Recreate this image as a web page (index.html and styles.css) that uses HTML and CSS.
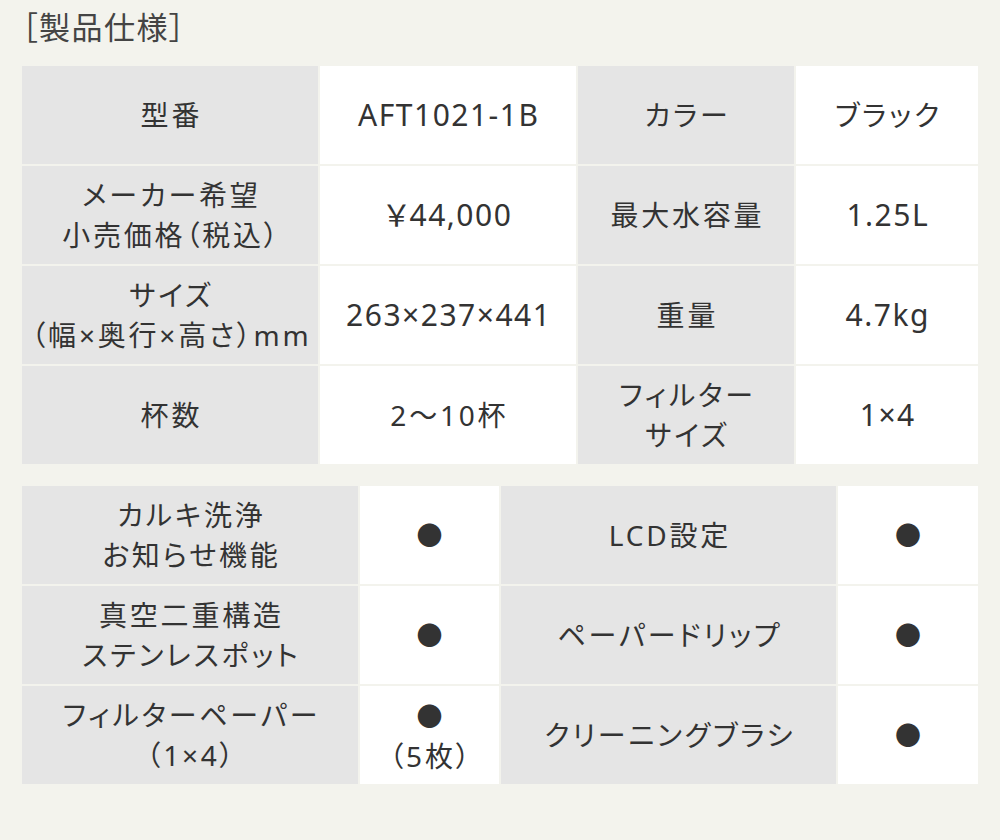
FILE: index.html
```html
<!DOCTYPE html>
<html lang="ja">
<head>
<meta charset="utf-8">
<link rel="stylesheet" href="styles.css">
</head>
<body>
<div class="page">
  <h2 class="title">［製品仕様］</h2>
  <div class="spec spec-main">
    <div class="cell head"><p>型番</p></div>
    <div class="cell val"><p class="en">AFT1021-1B</p></div>
    <div class="cell head"><p>カラー</p></div>
    <div class="cell val"><p>ブラック</p></div>

    <div class="cell head"><p>メーカー希望<br>小売価格（税込）</p></div>
    <div class="cell val"><p class="en">￥44,000</p></div>
    <div class="cell head"><p>最大水容量</p></div>
    <div class="cell val"><p class="en">1.25L</p></div>

    <div class="cell head"><p>サイズ<br>（幅×奥行×高さ）mm</p></div>
    <div class="cell val"><p class="en">263×237×441</p></div>
    <div class="cell head"><p>重量</p></div>
    <div class="cell val"><p class="en">4.7kg</p></div>

    <div class="cell head"><p>杯数</p></div>
    <div class="cell val"><p>2～10杯</p></div>
    <div class="cell head"><p>フィルター<br>サイズ</p></div>
    <div class="cell val"><p class="en">1×4</p></div>
  </div>

  <div class="spec spec-feat">
    <div class="cell head"><p>カルキ洗浄<br>お知らせ機能</p></div>
    <div class="cell val"><p class="dot">●</p></div>
    <div class="cell head"><p>LCD設定</p></div>
    <div class="cell val"><p class="dot">●</p></div>

    <div class="cell head"><p>真空二重構造<br>ステンレスポット</p></div>
    <div class="cell val"><p class="dot">●</p></div>
    <div class="cell head"><p>ペーパードリップ</p></div>
    <div class="cell val"><p class="dot">●</p></div>

    <div class="cell head"><p>フィルターペーパー<br>（1×4）</p></div>
    <div class="cell val"><p><span class="dot">●</span><br>（5枚）</p></div>
    <div class="cell head"><p>クリーニングブラシ</p></div>
    <div class="cell val"><p class="dot">●</p></div>
  </div>
</div>
</body>
</html>
```

FILE: styles.css
```css
html, body {
  margin: 0;
  padding: 0;
  background: #f3f3ed;
}

body {
  width: 1000px;
  height: 840px;
  font-family: "Noto Sans", "Noto Sans CJK JP", sans-serif;
  font-feature-settings: "palt";
  color: #333;
}

.page {
  padding: 4px 22px 0 22px;
}

.title {
  margin: 0 0 16px 0;
  font-size: 31px;
  font-weight: 400;
  letter-spacing: 1.5px;
  line-height: 46px;
  color: #444;
}

.spec {
  display: grid;
  gap: 2px;
  grid-auto-rows: 98px;
}

.spec-main {
  grid-template-columns: 296px 256px 216px 182px;
}

.spec-feat {
  margin-top: 22px;
  grid-template-columns: 336px 139px 335px 140px;
}

.cell {
  display: flex;
  align-items: center;
  justify-content: center;
  text-align: center;
  font-size: 28px;
  line-height: 40px;
  letter-spacing: 0.1em;
  white-space: nowrap;
}

.cell p {
  margin: 0;
  padding-left: 0.1em;
}

.cell .en {
  font-size: 30px;
  letter-spacing: 1.5px;
  padding-left: 1.5px;
}

.head {
  background: #e5e5e5;
}

.val {
  background: #ffffff;
}

.dot {
  font-size: 26px;
}
```
